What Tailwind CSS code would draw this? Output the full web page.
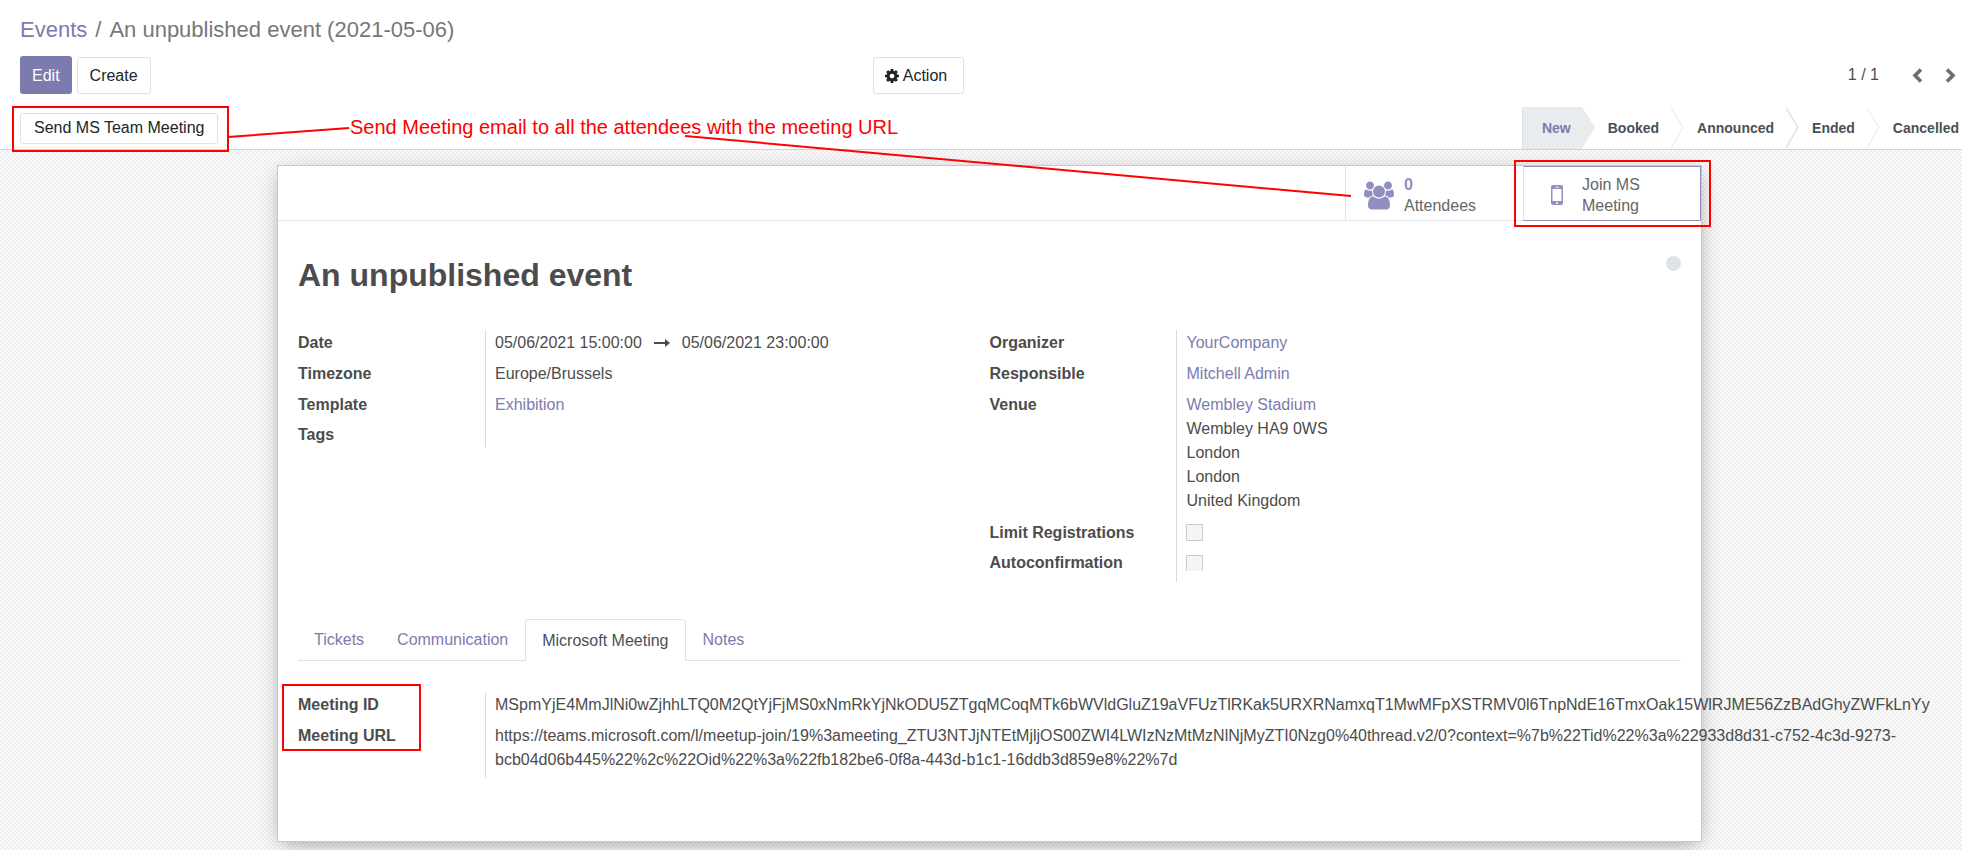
<!DOCTYPE html>
<html lang="en">
<head>
<meta charset="utf-8">
<title>An unpublished event (2021-05-06)</title>
<script src="https://cdn.jsdelivr.net/npm/@tailwindcss/browser@4"></script>
</head>
<body class="relative flex min-h-screen flex-col overflow-x-hidden bg-white font-['Liberation_Sans',Arial,sans-serif] text-base leading-6 text-[#4c4c4c]">

<header class="border-b border-[#cfd1da]">
  <nav aria-label="Breadcrumb" class="px-5 pt-3 text-[22px] leading-9 text-[#777]">
    <a href="#" class="text-[#7c7bad]">Events</a><span class="px-2">/</span><span>An unpublished event (2021-05-06)</span>
  </nav>
  <div class="mt-2 grid grid-cols-[11fr_14fr] items-center pr-1 pl-5">
    <div class="flex items-center gap-[5px]">
      <button class="h-[38px] rounded-[3px] bg-[#7c7bad] px-3 pt-0.5 text-white">Edit</button>
      <button class="h-[37px] rounded-[3px] border border-[#dee2e6] bg-white px-3 pt-0.5 text-[#212529]">Create</button>
    </div>
    <div class="flex items-center justify-between">
      <button class="flex h-[37px] items-center gap-1 rounded-[3px] border border-[#dee2e6] bg-white pt-0.5 pr-4 pl-[11px] text-[#212529]">
        <svg class="size-[14px]" viewBox="0 128 1536 1536" fill="currentColor"><path d="M1024 896q0-106-75-181t-181-75-181 75-75 181 75 181 181 75 181-75 75-181zm512-109v222q0 12-8 23t-20 13l-185 28q-19 54-39 91 35 50 107 138 10 12 10 25t-9 23q-27 37-99 108t-94 71q-12 0-26-9l-138-108q-44 23-91 38-16 136-29 186-7 28-36 28h-222q-14 0-24.500-8.500t-11.500-21.500l-28-184q-49-16-90-37l-141 107q-10 9-25 9-14 0-25-11-126-114-165-168-7-10-7-23 0-12 8-23 15-21 51-66.500t54-70.500q-27-50-41-99l-183-27q-13-2-21-12.500t-8-23.500v-222q0-12 8-23t19-13l186-28q14-46 39-92-40-57-107-138-10-12-10-24 0-10 9-23 26-36 98.500-107.500t94.500-71.500q13 0 26 10l138 107q44-23 91-38 16-136 29-186 7-28 36-28h222q14 0 24.500 8.500t11.500 21.500l28 184q49 16 90 37l142-107q9-9 24-9 13 0 25 10 129 119 165 170 7 8 7 22 0 12-8 23-15 21-51 66.500t-54 70.500q26 50 41 98l183 28q13 2 21 12.500t8 23.500z"/></svg>
        Action
      </button>
      <div class="flex items-center">
        <span class="mr-[31px]">1 / 1</span>
        <button aria-label="Previous" class="mr-5 text-[#6c6f75]"><svg class="h-[15px] w-[14px]" viewBox="0 0 14 15" fill="none" stroke="currentColor" stroke-width="3.600"><path d="M11 1.500 5 7.500l6 6"/></svg></button>
        <button aria-label="Next" class="text-[#6c6f75]"><svg class="h-[15px] w-[14px]" viewBox="0 0 14 15" fill="none" stroke="currentColor" stroke-width="3.600"><path d="m3 1.500 6 6-6 6"/></svg></button>
      </div>
    </div>
  </div>
  <div class="mt-[13px] flex items-center justify-between pl-5">
    <button class="h-[31px] rounded-[3px] border border-[#dee2e6] bg-white px-[13px] text-[#212529]">Send MS Team Meeting</button>
    <div class="flex h-[42px] items-stretch text-sm font-bold text-[#495057]">
      <button class="border-l border-[#dee2e6] bg-[#e9ecef] pr-[11px] pl-[19px] text-[#7c7bad]">New</button>
      <svg class="h-[42px] w-[13px]" viewBox="0 0 13 42"><path d="M0 0 13 20.500 0 42z" fill="#e9ecef"/></svg>
      <button class="pr-3 pl-[13px]">Booked</button>
      <svg class="h-[42px] w-[13px]" viewBox="0 0 13 42" fill="none" stroke="#e3e6ea"><path d="M0 1 12 20.500 0 41"/></svg>
      <button class="pr-3 pl-[13px]">Announced</button>
      <svg class="h-[42px] w-[13px]" viewBox="0 0 13 42" fill="none" stroke="#dee2e6" stroke-width="1.500"><path d="M0 1 12 20.500 0 41"/></svg>
      <button class="pr-3 pl-[13px]">Ended</button>
      <svg class="h-[42px] w-[13px]" viewBox="0 0 13 42" fill="none" stroke="#e3e6ea"><path d="M0 1 12 20.500 0 41"/></svg>
      <button class="pr-[3px] pl-[13px]">Cancelled</button>
    </div>
  </div>
</header>

<main class="flex-1 bg-[#f8f8f8] bg-[repeating-conic-gradient(#efefef_0_25%,#fafafa_0_50%)] bg-[length:4px_4px] pt-[15px] pr-[260px] pb-2 pl-[277px]">
  <section class="min-h-[677px] border border-[#c8c8d3] bg-white shadow-[0_5px_20px_-5px_rgba(0,0,0,0.4)]">
    <div class="flex h-[55px] justify-end border-b border-[#e6e6ea]">
      <button class="flex w-[178px] items-center border-l border-[#dee2e6] pt-[3px] pl-[18px] text-left leading-[21px] text-[#666]">
        <svg class="mt-0.5 mr-[10px] h-[29px] w-[30px] text-[#908fc0]" viewBox="0 0 1920 1792" fill="currentColor"><path d="M593 896q-162 5-265 128h-134q-82 0-138-40.500t-56-118.500q0-353 124-353 6 0 43.500 21t97.500 42.500 119 21.500q67 0 133-23-5 37-5 66 0 139 81 256zm1071 637q0 120-73 189.500t-194 69.500h-874q-121 0-194-69.500t-73-189.500q0-53 3.500-103.500t14-109 26.500-108.500 43-97.500 62-81 85.500-53.500 111.500-20q10 0 43 21.500t73 48 107 48 135 21.500 135-21.500 107-48 73-48 43-21.500q61 0 111.500 20t85.500 53.500 62 81 43 97.500 26.500 108.500 14 109 3.500 103.500zm-1024-1277q0 106-75 181t-181 75-181-75-75-181 75-181 181-75 181 75 75 181zm704 384q0 159-112.500 271.500t-271.500 112.500-271.500-112.500-112.500-271.500 112.500-271.500 271.500-112.500 271.500 112.500 112.500 271.500zm576 225q0 78-56 118.500t-138 40.500h-134q-103-123-265-128 81-117 81-256 0-29-5-66 66 23 133 23 59 0 119-21.500t97.500-42.500 43.500-21q124 0 124 353zm-128-609q0 106-75 181t-181 75-181-75-75-181 75-181 181-75 181 75 75 181z"/></svg>
        <span><b class="block text-[#908fc0]">0</b>Attendees</span>
      </button>
      <button class="flex h-[55px] w-[178px] items-center border border-[#908fc0] border-l-[#dee2e6] pt-[3px] pl-[27px] text-left leading-[21px] text-[#666]">
        <svg class="mr-[19px] h-5 w-3 text-[#908fc0]" viewBox="0 0 12 20"><path fill="currentColor" fill-rule="evenodd" d="M2 0h8a2 2 0 0 1 2 2v16a2 2 0 0 1-2 2H2a2 2 0 0 1-2-2V2a2 2 0 0 1 2-2zm-.500 4v12h9V4zM4 1.700v.8h4v-.8zM6 17a1 1 0 1 0 0 2 1 1 0 0 0 0-2z"/></svg>
        <span>Join MS<br>Meeting</span>
      </button>
    </div>

    <div class="px-5">
      <div class="flex items-start justify-between pt-[34px]">
        <h1 class="text-[32px] leading-[40px] font-bold">An unpublished event</h1>
        <span class="mt-px size-[15px] rounded-full bg-[#dee2e6]"></span>
      </div>

      <div class="mt-[35px] grid grid-cols-2">
        <dl class="grid grid-cols-[188px_1fr] content-start">
          <dt class="border-r border-[#d9d9d9] pt-px pb-[6px] font-bold">Date</dt><dd class="flex items-center pb-[5px] pl-[9px]">05/06/2021 15:00:00<svg class="mx-3 h-2 w-4" viewBox="0 0 16 8" fill="currentColor"><path d="M0 3h11V0l5 4-5 4V5H0z"/></svg>05/06/2021 23:00:00</dd>
          <dt class="border-r border-[#d9d9d9] pt-px pb-[6px] font-bold">Timezone</dt><dd class="pt-px pl-[9px]">Europe/Brussels</dd>
          <dt class="border-r border-[#d9d9d9] pt-px pb-[6px] font-bold">Template</dt><dd class="pt-px pl-[9px]"><a href="#" class="text-[#7c7bad]">Exhibition</a></dd>
          <dt class="border-r border-[#d9d9d9] font-bold">Tags</dt><dd></dd>
        </dl>
        <div class="grid grid-cols-[187px_1fr] content-start">
          <div class="border-r border-[#d9d9d9] pt-px pb-[6px] font-bold">Organizer</div><div class="pt-px pl-[10px]"><a href="#" class="text-[#7c7bad]">YourCompany</a></div>
          <div class="border-r border-[#d9d9d9] pt-px pb-[6px] font-bold">Responsible</div><div class="pt-px pl-[10px]"><a href="#" class="text-[#7c7bad]">Mitchell Admin</a></div>
          <div class="border-r border-[#d9d9d9] pt-px pb-[6px] font-bold">Venue</div><div class="pt-px pb-[7px] pl-[10px]"><a href="#" class="text-[#7c7bad]">Wembley Stadium</a><br>Wembley HA9 0WS<br>London<br>London<br>United Kingdom</div>
          <label for="limit" class="border-r border-[#d9d9d9] pt-px pb-[6px] font-bold">Limit Registrations</label><div class="pt-1 pl-[9px]"><input id="limit" type="checkbox" disabled class="block size-[17px] appearance-none border border-[#ccc] bg-[#f5f5f5]"></div>
          <label for="auto" class="border-r border-[#d9d9d9] pb-[7px] font-bold">Autoconfirmation</label><div class="pt-1 pl-[9px]"><input id="auto" type="checkbox" disabled class="block h-4 w-[17px] appearance-none border border-b-0 border-[#ccc] bg-[#f5f5f5]"></div>
        </div>
      </div>

      <div role="tablist" class="mt-[37px] flex h-[42px] gap-px border-b border-[#dee2e6] text-[#7c7bad]">
        <button role="tab" class="px-4">Tickets</button>
        <button role="tab" class="px-4">Communication</button>
        <button role="tab" aria-selected="true" class="h-[42px] rounded-t-[4px] border border-b-0 border-[#dee2e6] bg-white px-4 text-[#495057]">Microsoft Meeting</button>
        <button role="tab" class="px-4">Notes</button>
      </div>

      <dl class="mt-8 grid grid-cols-[188px_1fr]">
        <dt class="border-r border-[#d9d9d9] pb-[7px] font-bold">Meeting ID</dt><dd class="w-0 pl-[9px] whitespace-nowrap">MSpmYjE4MmJlNi0wZjhhLTQ0M2QtYjFjMS0xNmRkYjNkODU5ZTgqMCoqMTk6bWVldGluZ19aVFUzTlRKak5URXRNamxqT1MwMFpXSTRMV0l6TnpNdE16TmxOak15WlRJME56ZzBAdGhyZWFkLnYy</dd>
        <dt class="border-r border-[#d9d9d9] pb-[6px] font-bold">Meeting URL</dt><dd class="w-0 pb-[6px] pl-[9px] whitespace-nowrap">https://teams.microsoft.com/l/meetup-join/19%3ameeting_ZTU3NTJjNTEtMjljOS00ZWI4LWIzNzMtMzNlNjMyZTI0Nzg0%40thread.v2/0?context=%7b%22Tid%22%3a%22933d8d31-c752-4c3d-9273-<br>bcb04d06b445%22%2c%22Oid%22%3a%22fb182be6-0f8a-443d-b1c1-16ddb3d859e8%22%7d</dd>
      </dl>
    </div>
  </section>
</main>

<!-- Annotations over the form -->
<div class="pointer-events-none absolute inset-0 overflow-hidden">
  <svg class="absolute top-0 left-0 h-[850px] w-[1962px]" viewBox="0 0 1962 850" fill="none" stroke="#f00" stroke-width="2">
    <path d="M13 107h215v44H13zM1515 161h195v65h-195zM283 685h137v65H283zM228 137l121-9M685 136l666 60"/>
  </svg>
  <p class="absolute top-[114px] left-[350px] text-[20px] leading-[26px] whitespace-nowrap text-[#f00]">Send Meeting email to all the attendees with the meeting URL</p>
</div>
</body>
</html>
